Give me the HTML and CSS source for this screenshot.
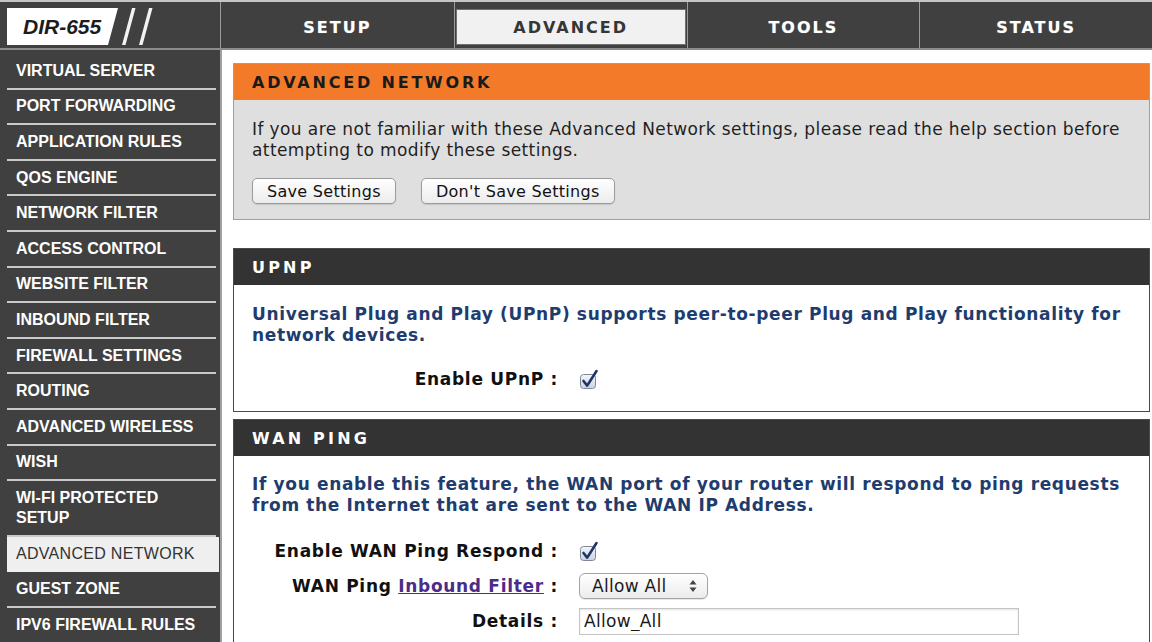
FILE: index.html
```html
<!DOCTYPE html>
<html lang="en">
<head>
<meta charset="utf-8">
<title>D-Link DIR-655 : Advanced Network</title>
<link rel="stylesheet" href="styles.css">
</head>
<body>
<div class="page">
  <header class="topbar">
    <div class="brand">
      <div class="logo">DIR-655</div>
      <svg class="slashes" width="34" height="37" viewBox="0 0 34 37" aria-hidden="true">
        <polygon points="11,0 14.5,0 4.5,37 1,37" fill="#f2f2f2"/>
        <polygon points="28,0 31.5,0 21.5,37 18,37" fill="#f2f2f2"/>
      </svg>
    </div>
    <nav class="tabs">
      <a class="tab" href="#"><span class="tab-label">SETUP</span></a>
      <a class="tab active" href="#"><span class="tab-label">ADVANCED</span></a>
      <a class="tab" href="#"><span class="tab-label">TOOLS</span></a>
      <a class="tab" href="#"><span class="tab-label">STATUS</span></a>
    </nav>
  </header>

  <div class="main">
    <aside class="sidebar">
      <ul class="nav">
        <li class="nav-item">VIRTUAL SERVER</li>
        <li class="nav-item">PORT FORWARDING</li>
        <li class="nav-item">APPLICATION RULES</li>
        <li class="nav-item">QOS ENGINE</li>
        <li class="nav-item">NETWORK FILTER</li>
        <li class="nav-item">ACCESS CONTROL</li>
        <li class="nav-item">WEBSITE FILTER</li>
        <li class="nav-item">INBOUND FILTER</li>
        <li class="nav-item">FIREWALL SETTINGS</li>
        <li class="nav-item">ROUTING</li>
        <li class="nav-item">ADVANCED WIRELESS</li>
        <li class="nav-item">WISH</li>
        <li class="nav-item">WI-FI PROTECTED SETUP</li>
        <li class="nav-item active">ADVANCED NETWORK</li>
        <li class="nav-item">GUEST ZONE</li>
        <li class="nav-item">IPV6 FIREWALL RULES</li>
      </ul>
    </aside>

    <main class="content">
      <section class="panel panel-notice">
        <h2 class="panel-head">ADVANCED NETWORK</h2>
        <div class="panel-body">
          <p class="intro">If you are not familiar with these Advanced Network settings, please read the help section before attempting to modify these settings.</p>
          <div class="actions">
            <button class="btn" type="button">Save Settings</button>
            <button class="btn" type="button">Don't Save Settings</button>
          </div>
        </div>
      </section>

      <section class="panel panel-dark">
        <h2 class="panel-head">UPNP</h2>
        <div class="panel-body">
          <p class="desc">Universal Plug and Play (UPnP) supports peer-to-peer Plug and Play functionality for network devices.</p>
          <div class="form">
            <span class="label">Enable UPnP&nbsp;:</span>
            <span class="check">
              <svg width="21" height="21" viewBox="0 0 21 21" aria-hidden="true">
                <defs>
                  <linearGradient id="cb1" x1="0" y1="0" x2="0" y2="1">
                    <stop offset="0" stop-color="#f4f7fb"/>
                    <stop offset="1" stop-color="#c9d3e2"/>
                  </linearGradient>
                </defs>
                <rect x="1.5" y="5.5" width="15" height="14" rx="3" fill="url(#cb1)" stroke="#7f8796"/>
                <path d="M4.5 12 L8.2 16.6 L17.5 2" fill="none" stroke="#1e3565" stroke-width="2.6" stroke-linecap="round" stroke-linejoin="round"/>
              </svg>
            </span>
          </div>
        </div>
      </section>

      <section class="panel panel-dark panel-wan">
        <h2 class="panel-head">WAN PING</h2>
        <div class="panel-body">
          <p class="desc">If you enable this feature, the WAN port of your router will respond to ping requests from the Internet that are sent to the WAN IP Address.</p>
          <div class="form">
            <span class="label">Enable WAN Ping Respond&nbsp;:</span>
            <span class="check">
              <svg width="21" height="21" viewBox="0 0 21 21" aria-hidden="true">
                <defs>
                  <linearGradient id="cb2" x1="0" y1="0" x2="0" y2="1">
                    <stop offset="0" stop-color="#f4f7fb"/>
                    <stop offset="1" stop-color="#c9d3e2"/>
                  </linearGradient>
                </defs>
                <rect x="1.5" y="5.5" width="15" height="14" rx="3" fill="url(#cb2)" stroke="#7f8796"/>
                <path d="M4.5 12 L8.2 16.6 L17.5 2" fill="none" stroke="#1e3565" stroke-width="2.6" stroke-linecap="round" stroke-linejoin="round"/>
              </svg>
            </span>

            <span class="label">WAN Ping <a class="link" href="#">Inbound Filter</a>&nbsp;:</span>
            <span class="select-wrap">
              <select class="select">
                <option>Allow All</option>
              </select>
              <svg class="select-arrows" width="8" height="12" viewBox="0 0 8 12" aria-hidden="true">
                <polygon points="4,0 7.5,4.5 0.5,4.5" fill="#444"/>
                <polygon points="0.5,7.5 7.5,7.5 4,12" fill="#444"/>
              </svg>
            </span>

            <span class="label">Details&nbsp;:</span>
            <span><input class="field" type="text" value="Allow_All"></span>
          </div>
        </div>
      </section>
    </main>
  </div>
</div>
</body>
</html>
```

FILE: styles.css
```css
* {
  box-sizing: border-box;
}

html,
body {
  margin: 0;
  padding: 0;
}

body {
  background: #ffffff;
  font-family: "DejaVu Sans", Verdana, sans-serif;
  color: #222;
}

.page {
  width: 1152px;
  height: 642px;
  overflow: hidden;
  display: flex;
  flex-direction: column;
}

/* ---------- top bar ---------- */
.topbar {
  display: flex;
  height: 50px;
  flex: none;
  background: #404040;
  border-top: 2px solid #c6c6c6;
  border-bottom: 2px solid #8c8c8c;
}

.brand {
  width: 221px;
  flex: none;
  display: flex;
  align-items: flex-start;
  padding: 6px 0 0 7px;
  border-right: 1px solid #9a9a9a;
}

.logo {
  width: 111px;
  height: 37px;
  background: #ffffff;
  clip-path: polygon(0 0, 100% 0, 91% 100%, 0 100%);
  display: flex;
  align-items: center;
  padding-left: 16px;
  font: italic bold 21px "Liberation Sans", Arial, sans-serif;
  color: #1c1c1c;
}

.slashes {
  margin-left: 3px;
}

.tabs {
  flex: 1;
  display: grid;
  grid-template-columns: repeat(4, 1fr);
}

.tab {
  display: flex;
  padding: 7px 1px 3px;
  border-left: 1px solid #9a9a9a;
  text-decoration: none;
  color: #ffffff;
  font: bold 16px "DejaVu Sans", Verdana, sans-serif;
  letter-spacing: 2px;
}

.tab:first-child {
  border-left: none;
}

.tab-label {
  flex: 1;
  display: flex;
  align-items: center;
  justify-content: center;
  text-shadow: 0 0 1px rgba(255, 255, 255, 0.4);
}

.tab.active .tab-label {
  background: #f1f1f1;
  border: 1px solid #707070;
  color: #363636;
  text-shadow: none;
}

/* ---------- body ---------- */
.main {
  flex: 1;
  display: flex;
  min-height: 0;
}

.sidebar {
  width: 220px;
  flex: none;
  background: #404040;
  padding-top: 4px;
}

.nav {
  list-style: none;
  margin: 0;
  padding: 0;
}

.nav-item {
  margin: 0 4px 0 7px;
  padding: 6.8px 4px 6.8px 9px;
  border-bottom: 2px solid #cacaca;
  font: bold 16px/20px "Liberation Sans", Arial, sans-serif;
  color: #ffffff;
}

.nav-item.active {
  margin-right: 1px;
  background: #efefef;
  border-bottom-color: #efefef;
  color: #333333;
  font-weight: normal;
  letter-spacing: 0.3px;
}

.content {
  flex: 1;
  border-left: 2px solid #a0a0a0;
  padding: 13px 2px 0 11px;
}

/* ---------- panels ---------- */
.panel {
  margin: 0;
}

.panel-head {
  margin: 0;
  height: 36px;
  display: flex;
  align-items: center;
  padding-left: 18px;
  font: bold 16px "DejaVu Sans", Verdana, sans-serif;
  letter-spacing: 3.2px;
}

.panel-body {
  padding: 19px 8px 15px 18px;
}

.panel-notice {
  border: 1px solid #f08a3e;
  margin-bottom: 28px;
}

.panel-notice .panel-head {
  background: #f37a28;
  color: #1a1a1a;
  letter-spacing: 2.8px;
}

.panel-notice .panel-body {
  background: #dfdfdf;
}

.intro {
  margin: 0;
  font: 17px/21px "DejaVu Sans", Verdana, sans-serif;
  letter-spacing: 0.4px;
  color: #1f1f1f;
}

.actions {
  display: flex;
  gap: 25px;
  margin-top: 17px;
}

.btn {
  height: 26px;
  padding: 0 14px;
  border: 1px solid #9b9b9b;
  border-radius: 5px;
  background: linear-gradient(#ffffff, #ececec);
  box-shadow: 0 1px 1px rgba(0, 0, 0, 0.12);
  font: 16px "DejaVu Sans", Verdana, sans-serif;
  letter-spacing: 0.3px;
  color: #111;
}

.panel-dark {
  border: 1px solid #4a4a4a;
}

.panel-dark .panel-head {
  background: #333333;
  color: #ffffff;
  height: 36px;
}

.panel-dark .panel-body {
  padding-bottom: 18px;
}

.panel-wan {
  margin-top: 7px;
}

.panel-wan .panel-body {
  padding-top: 18px;
}

.desc {
  margin: 0;
  font: bold 17px/21px "DejaVu Sans", Verdana, sans-serif;
  letter-spacing: 0.65px;
  color: #1f3c6e;
}

/* ---------- form rows ---------- */
.form {
  display: grid;
  grid-template-columns: 306px 1fr;
  grid-auto-rows: 28px;
  column-gap: 21px;
  row-gap: 7px;
  align-items: center;
  margin-top: 19px;
}

.panel-wan .form {
  margin-top: 21px;
}

.label {
  text-align: right;
  font: bold 17px "DejaVu Sans", Verdana, sans-serif;
  letter-spacing: 0.7px;
  color: #111;
  white-space: nowrap;
}

.link {
  color: #4b2c88;
  text-decoration: underline;
}

.check {
  display: flex;
  align-items: center;
  height: 28px;
}

.select-wrap {
  position: relative;
  display: inline-block;
  width: 129px;
  height: 26px;
}

.select {
  appearance: none;
  -webkit-appearance: none;
  width: 129px;
  height: 26px;
  padding: 0 0 0 12px;
  border: 1px solid #a3a3a3;
  border-radius: 6px;
  background: linear-gradient(#ffffff, #ececec);
  box-shadow: 0 1px 1px rgba(0, 0, 0, 0.1);
  font: 17px "DejaVu Sans", Verdana, sans-serif;
  letter-spacing: 0.3px;
  color: #1a1a1a;
}

.select-arrows {
  position: absolute;
  right: 11px;
  top: 7px;
  pointer-events: none;
}

.field {
  width: 440px;
  height: 27px;
  padding: 0 4px;
  border: 1px solid #c4c4c4;
  box-shadow: inset 0 1px 2px rgba(0, 0, 0, 0.12);
  font: 17px "DejaVu Sans", Verdana, sans-serif;
  letter-spacing: 0.3px;
  color: #1a1a1a;
  vertical-align: middle;
}
```
